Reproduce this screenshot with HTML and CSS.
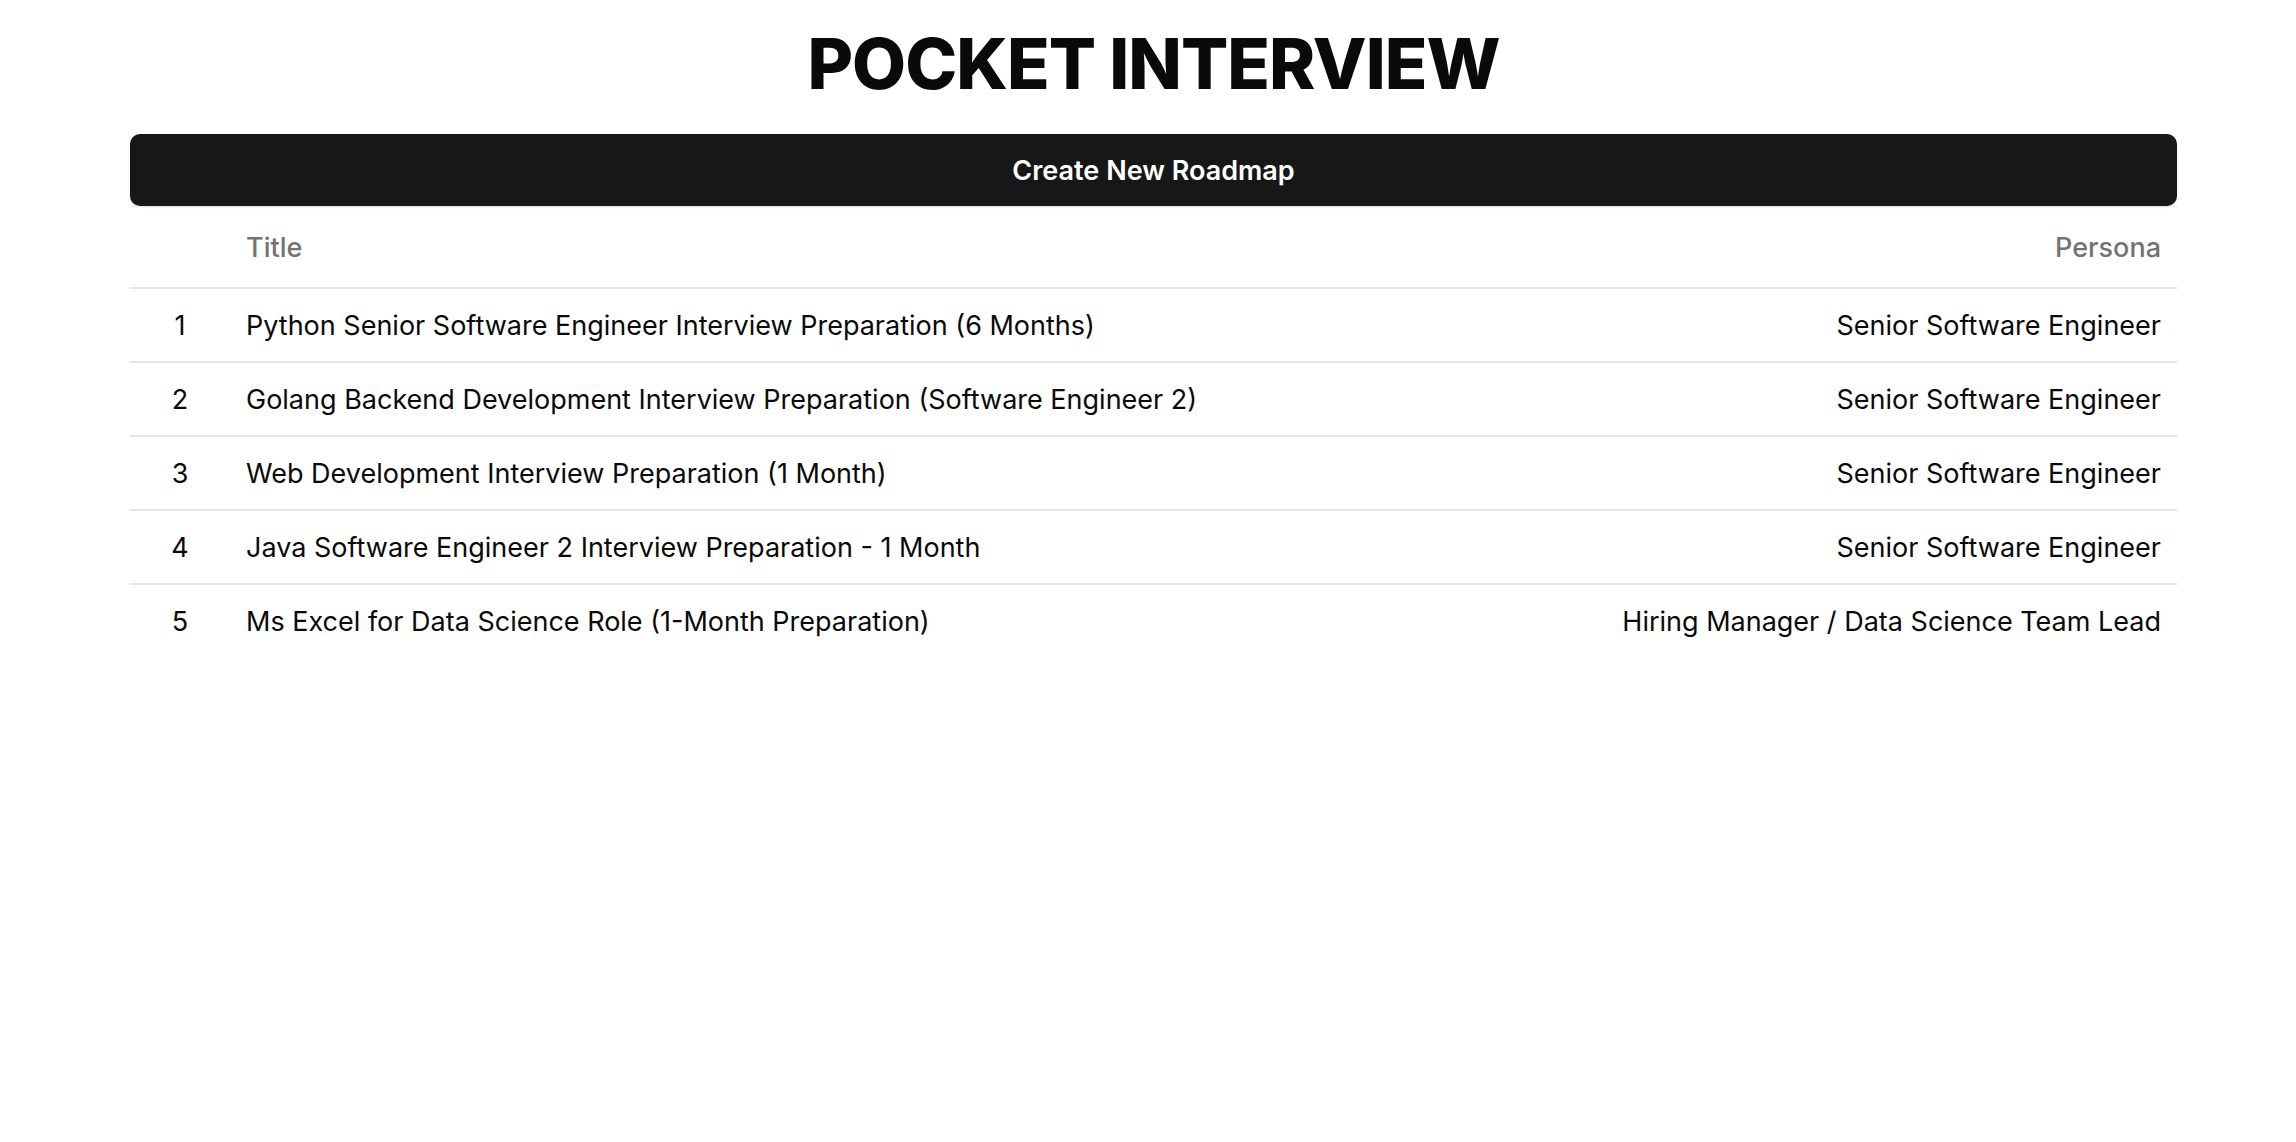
FILE: index.html
```html
<!DOCTYPE html>
<html>
<head>
<meta charset="utf-8">
<link rel="stylesheet" href="styles.css">
</head>
<body>
<main class="page">
  <h1 class="brand">POCKET INTERVIEW</h1>
  <button class="create-btn">Create New Roadmap</button>
  <table class="roadmaps">
    <thead>
      <tr><th class="num"></th><th class="title">Title</th><th class="persona">Persona</th></tr>
    </thead>
    <tbody>
      <tr><td class="num">1</td><td class="title">Python Senior Software Engineer Interview Preparation (6 Months)</td><td class="persona">Senior Software Engineer</td></tr>
      <tr><td class="num">2</td><td class="title">Golang Backend Development Interview Preparation (Software Engineer 2)</td><td class="persona">Senior Software Engineer</td></tr>
      <tr><td class="num">3</td><td class="title">Web Development Interview Preparation (1 Month)</td><td class="persona">Senior Software Engineer</td></tr>
      <tr><td class="num">4</td><td class="title">Java Software Engineer 2 Interview Preparation - 1 Month</td><td class="persona">Senior Software Engineer</td></tr>
      <tr><td class="num">5</td><td class="title">Ms Excel for Data Science Role (1-Month Preparation)</td><td class="persona">Hiring Manager / Data Science Team Lead</td></tr>
    </tbody>
  </table>
</main>
</body>
</html>
```
FILE: styles.css
```css
html, body {
  margin: 0;
  padding: 0;
  background: #fff;
  font-family: Inter, "Noto Sans", sans-serif;
  color: #0a0a0a;
}
.page {
  width: 2047px;
  margin-left: 130px;
  display: flex;
  flex-direction: column;
}
.brand {
  margin: 0;
  padding-top: 22px;
  height: 134px;
  box-sizing: border-box;
  text-align: center;
  font-size: 70px;
  font-weight: 800;
  letter-spacing: -1px;
  line-height: 84px;
  color: #0a0a0a;
}
.create-btn {
  height: 72px;
  border: none;
  border-radius: 10px;
  background: #171717;
  color: #fff;
  font-family: Inter, "Noto Sans", sans-serif;
  font-size: 27px;
  font-weight: 600;
  padding: 0;
  box-shadow: 0 1px 2px rgba(0,0,0,0.15);
}
.roadmaps {
  width: 100%;
  border-collapse: collapse;
  font-size: 27px;
  border-top: 1px solid #e5e5e5;
}
.roadmaps th {
  height: 80px;
  font-weight: 500;
  color: #737373;
  border-bottom: 2px solid #e5e5e5;
  padding: 0 16px;
}
.roadmaps td {
  height: 72px;
  padding: 0 16px;
  border-bottom: 2px solid #e5e5e5;
  font-weight: 400;
}
.roadmaps tbody tr:last-child td {
  border-bottom: none;
}
.num {
  width: 68px;
  text-align: center;
}
.title {
  text-align: left;
}
.persona {
  text-align: right;
}
```
